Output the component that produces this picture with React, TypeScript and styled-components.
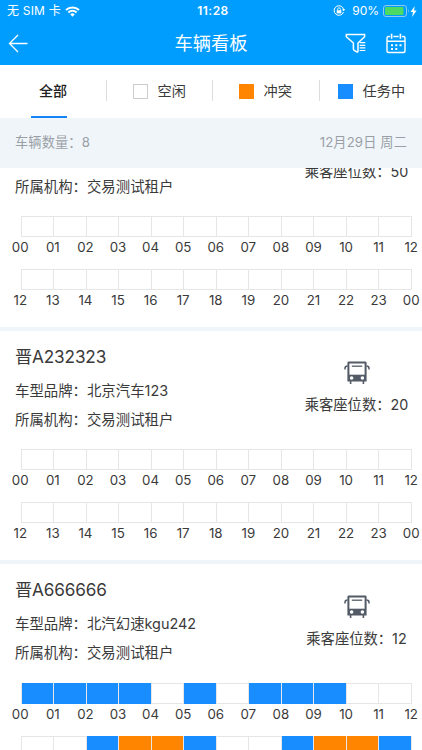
import React from "react";
import styled, { createGlobalStyle } from "styled-components";

const GlobalStyle = createGlobalStyle`
  * { box-sizing: border-box; }
  body {
    margin: 0;
    background: #fff;
    color: #3a3a3a;
    font-family: Inter, "Noto Sans CJK SC", sans-serif;
    font-size: 14.4px;
    overflow: hidden;
  }
`;

const Screen = styled.div`
  width: 422px;
  height: 750px;
  display: flex;
  flex-direction: column;
  overflow: hidden;
  background: #fff;
`;

const Header = styled.header`
  flex: none;
  height: 65px;
  background: #009dff;
  color: #fff;
`;

const StatusBar = styled.div`
  height: 22px;
  display: grid;
  grid-template-columns: 1fr auto 1fr;
  align-items: center;
  padding: 0 5px 0 7px;
  font-size: 12px;
  line-height: 22px;
`;

const StatusGroup = styled.div<{ $end?: boolean }>`
  display: flex;
  align-items: center;
  justify-content: ${(p) => (p.$end ? "flex-end" : "flex-start")};
`;

const Carrier = styled.span`
  letter-spacing: 0.2px;
  margin-right: 4px;
`;

const Clock = styled.span`
  font-weight: 600;
  font-size: 12px;
  letter-spacing: 0.5px;
  padding-left: 2px;
`;

const Percent = styled.span`
  margin: 0 4px 0 7px;
  font-size: 12px;
`;

const NavBar = styled.div`
  height: 43px;
  display: grid;
  grid-template-columns: 1fr auto 1fr;
  align-items: center;
  padding: 0 16px 0 8px;
`;

const NavTitle = styled.h1`
  margin: 0 0 0 8px;
  font-size: 18.3px;
  font-weight: 400;
  line-height: 43px;
`;

const NavActions = styled.div`
  display: flex;
  justify-content: flex-end;
  gap: 19px;
`;

const Tabs = styled.nav`
  flex: none;
  height: 53px;
  display: grid;
  grid-template-columns: 106px 106px 107px 103px;
`;

const Tab = styled.div<{ $pad: number }>`
  display: flex;
  align-items: center;
  height: 52px;
  padding-left: ${(p) => p.$pad}px;
  line-height: 50px;
  font-size: 14.2px;
  background: linear-gradient(#ddd, #ddd) left 15px / 1px 21px no-repeat;
`;

const ActiveTab = styled.div`
  height: 53px;
  padding-left: 39px;
  background: linear-gradient(#1684f5, #1684f5) 31px 51px / 36px 2px no-repeat;
  color: #222;
  font-weight: 500;
  font-size: 14px;
  line-height: 51px;
`;

const Swatch = styled.i<{ $color: string; $outline?: boolean }>`
  width: 14.5px;
  height: 15px;
  margin-right: 10px;
  background: ${(p) => p.$color};
  border: ${(p) => (p.$outline ? "1px solid #ccc" : "none")};
`;

const Summary = styled.div`
  flex: none;
  height: 50px;
  display: flex;
  justify-content: space-between;
  padding: 0 15px;
  background: #f0f5fa;
  color: #999fa5;
  font-size: 13.2px;
  letter-spacing: 0.14px;
  line-height: 49px;
`;

const List = styled.main`
  flex: 1;
  min-height: 0;
  overflow: hidden;
`;

const Card = styled.section`
  border-bottom: 4px solid #f0f5fa;
  padding-bottom: 5.1px;
`;

const Info = styled.div<{ $scrolled?: boolean }>`
  height: ${(p) => (p.$scrolled ? 47.9 : 118.3)}px;
  display: flex;
  align-items: flex-end;
  justify-content: space-between;
  padding: 0 13px 0 15px;
`;

const Details = styled.div`
  padding-bottom: 15px;
`;

const Plate = styled.h2`
  margin: 0 0 5px;
  font-size: 17.2px;
  font-weight: 400;
  letter-spacing: -0.15px;
  line-height: 28px;
`;

const Line = styled.p`
  margin: 0;
  line-height: 29.2px;
  white-space: nowrap;
`;

const Seats = styled.div`
  width: 105px;
  display: flex;
  flex-direction: column;
  align-items: center;
  padding-bottom: 30px;
`;

const SeatText = styled.span`
  margin-top: 5px;
  font-size: 14.3px;
  line-height: 29px;
  white-space: nowrap;
`;

const Timeline = styled.div`
  height: 53px;
  padding: 0 10.4px 0 21px;
`;

const Bars = styled.div`
  height: 21px;
  display: grid;
  grid-template-columns: repeat(12, 1fr);
  border: 1px solid #e6e6e6;
  border-width: 1px 1px 1px 0;
`;

type SlotState = "free" | "busy" | "clash";
const slotColor: Record<SlotState, string> = {
  free: "transparent",
  busy: "#188dff",
  clash: "#ff8500",
};

const Slot = styled.div<{ $state: SlotState }>`
  border-left: 1px solid #e6e6e6;
  background: ${(p) => slotColor[p.$state]};
  background-clip: padding-box;
  margin: ${(p) => (p.$state === "free" ? "0" : "-1px 0")};
`;

const Hours = styled.div`
  display: flex;
  justify-content: space-between;
  margin: 0 -16px 0 -17px;
  font-size: 13.3px;
  line-height: 20px;
`;

const Hour = styled.span`
  width: 32.5px;
  text-align: center;
`;

const WifiIcon = () => (
  <svg width="15" height="11" viewBox="0 0 15 11" fill="none" stroke="#fff" strokeWidth="2">
    <path d="M1 4a9.4 9.4 0 0 1 13 0M3.4 6.5a5.9 5.9 0 0 1 8.2 0" />
    <path d="M5.2 8.3a3.3 3.3 0 0 1 4.6 0L7.5 10.8Z" fill="#fff" stroke="none" />
  </svg>
);

const LockIcon = () => (
  <svg width="12" height="12" viewBox="0 0 12 12" fill="none" stroke="#fff">
    <path d="M10.5 7A4.8 4.8 0 1 1 10.7 5M9.3 4.7l1.5 1 1-1.6" />
    <path d="M4.6 5.4V4.2a1.4 1.4 0 0 1 2.8 0v1.2" strokeWidth=".8" />
    <rect x="3.7" y="5.2" width="4.6" height="3.2" fill="#fff" stroke="none" />
  </svg>
);

const BatteryIcon = () => (
  <svg width="27" height="12" viewBox="0 0 27 12" fill="none">
    <rect x=".5" y=".5" width="23" height="11" rx="2.5" stroke="#8fcaf2" />
    <rect x="2" y="2" width="18.5" height="8" rx="1" fill="#4cd964" />
    <path d="M25 4q1.5 2 0 4Z" fill="#8fcaf2" />
  </svg>
);

const BoltIcon = () => (
  <svg width="7" height="11" viewBox="0 0 7 11" fill="#fff">
    <path d="M4.8 0 .5 6h2.4L2.1 11 6.6 4.6H4Z" />
  </svg>
);

const BackIcon = () => (
  <svg width="21" height="20" viewBox="0 0 21 20" fill="none" stroke="#fff" strokeWidth="1.3">
    <path d="M19.5 9.5H1.5M10 1 1.5 9.5 10 18" />
  </svg>
);

const FilterIcon = () => (
  <svg width="22" height="22" viewBox="0 0 22 22" fill="none" stroke="#fff" strokeWidth="1.5" strokeLinejoin="round">
    <path d="M1.3 1.5h18.3v2.2L13 10v8.3q0 .8-.8.8l-3-1.8q-.8-.5-.8-1.3v-6L1.3 3.7Z" />
    <path d="M14.7 9.7h5.6M14.7 12.3h5.6M14.7 14.9h5.6M14.7 17.5h5.6" strokeWidth="1.2" />
  </svg>
);

const CalendarIcon = () => (
  <svg width="20" height="22" viewBox="0 0 20 22" fill="none" stroke="#fff" strokeWidth="1.4">
    <path d="M4 3.5H2.8Q1 3.5 1 5.3v12.4q0 1.8 1.8 1.8h14.4q1.8 0 1.8-1.8V5.3q0-1.8-1.8-1.8H16M7.3 3.5h5.4M1 8.3h18" />
    <path d="M5.6.7v5M14.4.7v5" strokeWidth="1.6" />
    <path d="M5 12.2h2M9.3 12.2h2M13.5 12.2h2M5 16.1h2M9.3 16.1h2" strokeWidth="2" />
  </svg>
);

const BusIcon = () => (
  <svg width="26" height="25" viewBox="0 0 26 25" fill="none">
    <path d="M4.8 1.5h16.4q1.4 0 1.4 1.4v18.6H3.4V2.9q0-1.4 1.4-1.4Z" fill="#535b67" />
    <path d="M5.4 3.5h15.2v11.2H5.4Z" fill="#fff" />
    <path d="M7.8 6.2h10.4" stroke="#535b67" strokeWidth="1.3" />
    <path d="M3.5 5.9Q1 5.9 1 8.3v1.2M22.5 5.9Q25 5.9 25 8.3v1.2" stroke="#535b67" strokeWidth="1.5" />
    <path d="M6.6 21v3M19.4 21v3" stroke="#535b67" strokeWidth="1.6" />
    <circle cx="7.6" cy="18" r="1.8" fill="#fff" />
    <circle cx="18.4" cy="18" r="1.8" fill="#fff" />
  </svg>
);

const two = (n: number) => String(n).padStart(2, "0");
const morning = Array.from({ length: 13 }, (_, i) => two(i));
const evening = Array.from({ length: 13 }, (_, i) => two((i + 12) % 24));

interface Vehicle {
  plate?: string;
  brand?: string;
  org: string;
  seats: number;
  busy: number[];
  clash: number[];
}

const vehicles: Vehicle[] = [
  { org: "交易测试租户", seats: 50, busy: [], clash: [] },
  { plate: "晋A232323", brand: "北京汽车123", org: "交易测试租户", seats: 20, busy: [], clash: [] },
  {
    plate: "晋A666666",
    brand: "北汽幻速kgu242",
    org: "交易测试租户",
    seats: 12,
    busy: [0, 1, 2, 3, 5, 7, 8, 9, 14, 17, 20, 23],
    clash: [15, 16, 21, 22],
  },
];

const HalfDay = ({ vehicle, start, hours }: { vehicle: Vehicle; start: number; hours: string[] }) => (
  <Timeline>
    <Bars>
      {hours.slice(1).map((_, i) => {
        const h = start + i;
        const state = vehicle.clash.includes(h) ? "clash" : vehicle.busy.includes(h) ? "busy" : "free";
        return <Slot key={h} $state={state} />;
      })}
    </Bars>
    <Hours>
      {hours.map((h, i) => (
        <Hour key={i}>{h}</Hour>
      ))}
    </Hours>
  </Timeline>
);

/* A vehicle without a plate is the one whose heading is scrolled under the summary bar. */
const VehicleCard = ({ vehicle }: { vehicle: Vehicle }) => (
  <Card>
    <Info $scrolled={!vehicle.plate}>
      <Details>
        {vehicle.plate && <Plate>{vehicle.plate}</Plate>}
        {vehicle.brand && <Line>车型品牌：{vehicle.brand}</Line>}
        <Line>所属机构：{vehicle.org}</Line>
      </Details>
      <Seats>
        {vehicle.plate && <BusIcon />}
        <SeatText>乘客座位数：{vehicle.seats}</SeatText>
      </Seats>
    </Info>
    <HalfDay vehicle={vehicle} start={0} hours={morning} />
    <HalfDay vehicle={vehicle} start={12} hours={evening} />
  </Card>
);

export default function App() {
  return (
    <Screen>
      <GlobalStyle />
      <Header>
        <StatusBar>
          <StatusGroup>
            <Carrier>无 SIM 卡</Carrier>
            <WifiIcon />
          </StatusGroup>
          <Clock>11:28</Clock>
          <StatusGroup $end>
            <LockIcon />
            <Percent>90%</Percent>
            <BatteryIcon />
            <BoltIcon />
          </StatusGroup>
        </StatusBar>
        <NavBar>
          <BackIcon />
          <NavTitle>车辆看板</NavTitle>
          <NavActions>
            <FilterIcon />
            <CalendarIcon />
          </NavActions>
        </NavBar>
      </Header>
      <Tabs>
        <ActiveTab>全部</ActiveTab>
        <Tab $pad={27}>
          <Swatch $color="#fff" $outline />
          空闲
        </Tab>
        <Tab $pad={27}>
          <Swatch $color="#ff8500" />
          冲突
        </Tab>
        <Tab $pad={19}>
          <Swatch $color="#188dff" />
          任务中
        </Tab>
      </Tabs>
      <Summary>
        <span>车辆数量：8</span>
        <span>12月29日 周二</span>
      </Summary>
      <List>
        {vehicles.map((v, i) => (
          <VehicleCard key={i} vehicle={v} />
        ))}
      </List>
    </Screen>
  );
}
